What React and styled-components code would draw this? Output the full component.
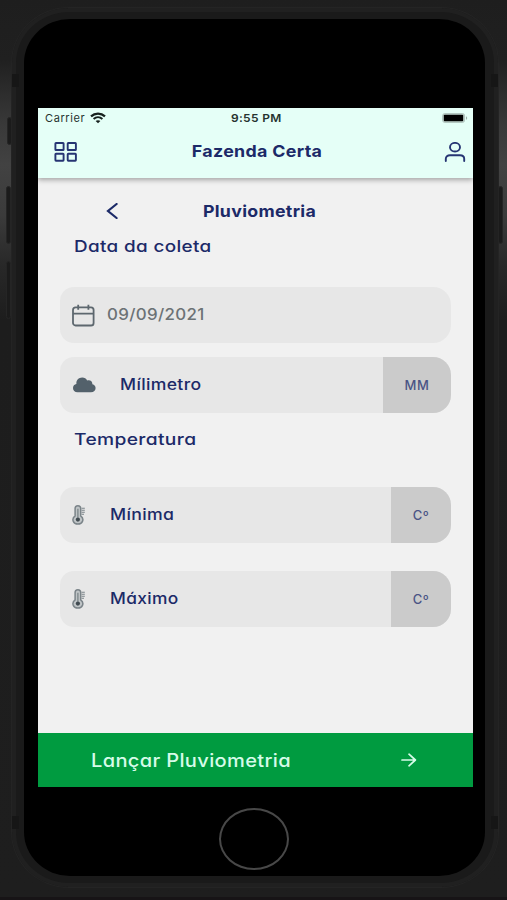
import styled, { createGlobalStyle } from "styled-components";

const GlobalStyle = createGlobalStyle`
  * {
    box-sizing: border-box;
  }
  body {
    margin: 0;
    background: #1e1e1e;
    font-family: Inter, "Noto Sans", sans-serif;
  }
  p, h1, h2 {
    margin: 0;
  }
`;

const Page = styled.main`
  position: relative;
  width: 507px;
  height: 900px;
  padding: 7px 8px 12px 11px;
  overflow: hidden;
  border-bottom: 3px solid #171416;
  background: linear-gradient(
    #1e1e1e 0,
    #202020 60px,
    #393939 125px,
    #424242 165px,
    #3b3b3b 215px,
    #282828 265px,
    #1d1d1d 320px,
    #1e1e1e 900px
  );
`;
const SideButton = styled.span`
  position: absolute;
  left: ${(props) => props.$left}px;
  top: ${(props) => props.$top}px;
  width: 5px;
  height: ${(props) => props.$height}px;
  border: 1px solid #252525;
  border-radius: 3px;
  background: #1b1b1b;
`;
const Phone = styled.div`
  position: relative;
  width: 488px;
  height: 881px;
  padding: 11px 13px 11px 12px;
  border: 1px solid #242424;
  border-radius: 58px / 56px;
  background: #1a1a1a;
  box-shadow: inset 0 0 0 4px #202020;
`;
const AntennaLine = styled.span`
  position: absolute;
  width: 7px;
  height: 13px;
  background: #161616;
  left: ${(props) => (props.$right ? "479px" : "0")};
  top: ${(props) => props.$top}px;
`;
const Bezel = styled.div`
  display: flex;
  flex-direction: column;
  align-items: center;
  height: 857px;
  padding: 89px 0 0 2px;
  border-radius: 46px / 44px;
  background: #000000;
`;
const Screen = styled.div`
  display: flex;
  flex-direction: column;
  flex-shrink: 0;
  width: 435px;
  height: 679px;
  background: #f1f1f1;
  color: #1c2a68;
`;
const HomeButton = styled.div`
  flex-shrink: 0;
  width: 70px;
  height: 62px;
  margin-top: 21px;
  margin-right: 3px;
  border: 2px solid #484848;
  border-radius: 50%;
`;

const Header = styled.header`
  height: 70px;
  background: #e5fff7;
  box-shadow: 0 2px 5px rgba(0, 0, 0, 0.32);
`;
const StatusBar = styled.div`
  display: grid;
  grid-template-columns: 1fr auto 1fr;
  align-items: center;
  height: 20px;
  padding: 0 5px 0 7px;
  font-size: 11px;
  color: #26332f;
`;
const Carrier = styled.div`
  display: flex;
  align-items: center;
  gap: 5px;
  letter-spacing: 0.6px;
`;
const Clock = styled.p`
  font-weight: 600;
  letter-spacing: 0.3px;
  transform: scaleX(1.09);
`;
const BatteryIcon = styled.svg`
  justify-self: end;
`;
const AppBar = styled.div`
  display: flex;
  align-items: center;
  justify-content: space-between;
  height: 48px;
  padding: 0 7px 0 16px;
`;
const AppTitle = styled.h1`
  padding: 0 8px 3px 0;
  font-size: 16.5px;
  font-weight: 700;
  letter-spacing: 0.3px;
  transform: scaleX(1.08);
`;

const Content = styled.div`
  flex: 1;
  padding: 20px 22px 0;
`;
const TitleRow = styled.div`
  display: grid;
  grid-template-columns: 28px 1fr 28px;
  align-items: center;
  height: 26px;
  padding: 0 38px 0 46px;
`;
const Title = styled.h2`
  text-align: center;
  font-size: 16.5px;
  font-weight: 700;
  letter-spacing: 0.3px;
  transform: scaleX(1.075);
`;
/* rounded, wide lettering shared by labels and fields */
const WideText = styled.p`
  font-weight: 500;
  letter-spacing: 0.3px;
  font-feature-settings: "cv11";
  transform: scaleX(${(props) => props.$stretch});
  transform-origin: left center;
`;
const SectionLabel = styled(WideText)`
  width: 180px;
  height: 26px;
  margin: ${(props) => props.$margin};
  line-height: 26px;
  font-size: 16.5px;
`;
const Field = styled.div`
  display: flex;
  align-items: center;
  width: 391px;
  height: 56px;
  margin-bottom: ${(props) => props.$bottom}px;
  padding-left: 12px;
  overflow: hidden;
  border-radius: 14px 18px 18px 14px;
  background: #e7e7e7;
`;
const FieldIcon = styled.span`
  display: flex;
  align-items: center;
  width: ${(props) => props.$width}px;
  color: #53616b;
`;
const FieldText = styled(WideText)`
  margin-right: auto;
  padding-bottom: 1px;
  font-size: 15.5px;
  color: ${(props) => (props.$muted ? "#6c7275" : "#1c2a68")};
`;
const Unit = styled.span`
  display: flex;
  align-items: center;
  justify-content: center;
  width: ${(props) => props.$width}px;
  height: 100%;
  padding-bottom: 1px;
  background: #cbcbcb;
  font-size: 13px;
  font-weight: 500;
  letter-spacing: 0.6px;
  color: #4a5485;
`;

const SubmitButton = styled.button`
  display: flex;
  align-items: center;
  justify-content: space-between;
  height: 54px;
  padding: 0 56px 0 53px;
  border: none;
  background: #009b40;
  color: #d6fbe9;
  font-family: inherit;
`;
const SubmitText = styled(WideText)`
  font-size: 18px;
`;

const WifiIcon = () => (
  <svg width="16" height="12" viewBox="0 0 16 12" fill="none" stroke="#17211e">
    <path d="M1 4.4C5 .6 11 .6 15 4.4" strokeWidth="2.2" />
    <path d="M3.6 6.9C6.2 4.6 9.8 4.6 12.4 6.9" strokeWidth="2" />
    <path d="M8 11.3 5.6 9C6.9 7.9 9.1 7.9 10.4 9Z" fill="#17211e" stroke="none" />
  </svg>
);

const GridIcon = () => (
  <svg width="24" height="20" viewBox="0 0 24 20" fill="none" stroke="#263573" strokeWidth="1.9">
    <rect x="1.4" y="1" width="8.2" height="7" rx="0.6" />
    <rect x="13.7" y="1" width="8.2" height="7" rx="0.6" />
    <rect x="1.4" y="11.7" width="8.2" height="7" rx="0.6" />
    <rect x="13.7" y="11.7" width="8.2" height="7" rx="0.6" />
  </svg>
);

const UserIcon = () => (
  <svg width="22" height="20" viewBox="0 0 22 20" fill="none" stroke="#263573" strokeWidth="1.9">
    <ellipse cx="11" cy="5.2" rx="5" ry="4.3" />
    <path d="M1.8 19v-2.2c0-2.2 1.7-3.6 4.2-3.6h10c2.5 0 4.2 1.4 4.2 3.6V19" strokeLinecap="round" />
  </svg>
);

const BackIcon = () => (
  <svg width="12" height="16" viewBox="0 0 12 16" fill="none" stroke="#1c2a68" strokeWidth="2.2">
    <path d="M10.6 1 2 8l8.6 7" strokeLinecap="round" />
  </svg>
);

const CalendarIcon = () => (
  <svg width="23" height="23" viewBox="0 0 23 23" fill="none" stroke="#5d676e" strokeWidth="1.8">
    <rect x="1" y="3.3" width="20.6" height="18.2" rx="2.6" />
    <path d="M1 9.6h20.6M6.2.8v5M16.4.8v5" />
  </svg>
);

const CloudIcon = () => (
  <svg width="24" height="16" viewBox="0 0 24 16" fill="currentColor">
    <path d="M5.6 15.3C2.7 15.3 1 13.4 1 11c0-2.2 1.4-3.7 3.4-4.1C4 3.4 6.7.6 10.2.6c2.3 0 3.9 1 4.9 2.8 3-.9 5.5.9 5.3 3.8 2.1.6 3.2 2 3.2 3.9 0 2.5-1.8 4.2-4.7 4.2Z" />
  </svg>
);

const ThermometerIcon = () => (
  <svg width="14" height="20" viewBox="0 0 14 20" fill="none" stroke="#7b8489">
    <path
      d="M3.1 3.6C3.1-.1 8.7-.1 8.7 3.6v7.3c4.1 3.1 1.8 8.2-2.8 8.2S-1 14 3.1 10.9Z"
      fill="#c0c5c7"
      strokeWidth="1.5"
    />
    <path d="M5.9 3.8v9" strokeWidth="1.3" />
    <circle cx="5.9" cy="14.6" r="2.1" fill="#414b51" stroke="none" />
    <path d="M9.6 3.2h3.2M9.6 5.2h3.2M9.6 7.2h3.2M9.6 9.2h2.4" strokeWidth="1.1" />
  </svg>
);

const ArrowIcon = () => (
  <svg width="16" height="14" viewBox="0 0 16 14" fill="none" stroke="currentColor" strokeWidth="1.7">
    <path d="M1 7h13M8 1.2 14.4 7 8 12.8" strokeLinecap="round" strokeLinejoin="round" />
  </svg>
);

const temperatures = [
  { id: "min", label: "Mínima", stretch: 1.14, bottom: 28 },
  { id: "max", label: "Máximo", stretch: 1.12, bottom: 0 },
];

const App = () => {
  return (
    <>
      <GlobalStyle />
      <Page>
        <SideButton $left={7} $top={117} $height={28} />
        <SideButton $left={6} $top={186} $height={58} />
        <SideButton $left={6} $top={261} $height={58} />
        <SideButton $left={498} $top={186} $height={58} />
        <Phone>
          <AntennaLine $top={66} />
          <AntennaLine $top={66} $right />
          <AntennaLine $top={808} />
          <AntennaLine $top={808} $right />
          <Bezel>
            <Screen>
              <Header>
                <StatusBar>
                  <Carrier>
                    Carrier
                    <WifiIcon />
                  </Carrier>
                  <Clock>9:55 PM</Clock>
                  <BatteryIcon width="26" height="10" viewBox="0 0 26 10">
                    <rect x="0.6" y="0.6" width="22" height="8.8" rx="2.2" fill="#c4d8d1" stroke="#b0c4bd" />
                    <rect x="1.8" y="1.8" width="19.4" height="6.4" rx="0.8" fill="#000000" />
                    <path d="M24 3.2c1.6.5 1.6 3.1 0 3.6Z" fill="#9fb2ab" />
                  </BatteryIcon>
                </StatusBar>
                <AppBar>
                  <GridIcon />
                  <AppTitle>Fazenda Certa</AppTitle>
                  <UserIcon />
                </AppBar>
              </Header>
              <Content>
                <TitleRow>
                  <BackIcon />
                  <Title>Pluviometria</Title>
                </TitleRow>
                <SectionLabel $margin="9px 0 28px 14px" $stretch={1.145}>
                  Data da coleta
                </SectionLabel>
                <Field $bottom={14}>
                  <FieldIcon $width={35}>
                    <CalendarIcon />
                  </FieldIcon>
                  <FieldText $muted $stretch={1.09}>
                    09/09/2021
                  </FieldText>
                </Field>
                <Field $bottom={13}>
                  <FieldIcon $width={48}>
                    <CloudIcon />
                  </FieldIcon>
                  <FieldText $stretch={1.135}>Mílimetro</FieldText>
                  <Unit $width={68}>MM</Unit>
                </Field>
                <SectionLabel $margin="0 0 35px 14px" $stretch={1.165}>
                  Temperatura
                </SectionLabel>
                {temperatures.map((item) => (
                  <Field key={item.id} $bottom={item.bottom}>
                    <FieldIcon $width={38}>
                      <ThermometerIcon />
                    </FieldIcon>
                    <FieldText $stretch={item.stretch}>{item.label}</FieldText>
                    <Unit $width={60}>Cº</Unit>
                  </Field>
                ))}
              </Content>
              <SubmitButton>
                <SubmitText as="span" $stretch={1.115}>
                  Lançar Pluviometria
                </SubmitText>
                <ArrowIcon />
              </SubmitButton>
            </Screen>
            <HomeButton />
          </Bezel>
        </Phone>
      </Page>
    </>
  );
};

export default App;
